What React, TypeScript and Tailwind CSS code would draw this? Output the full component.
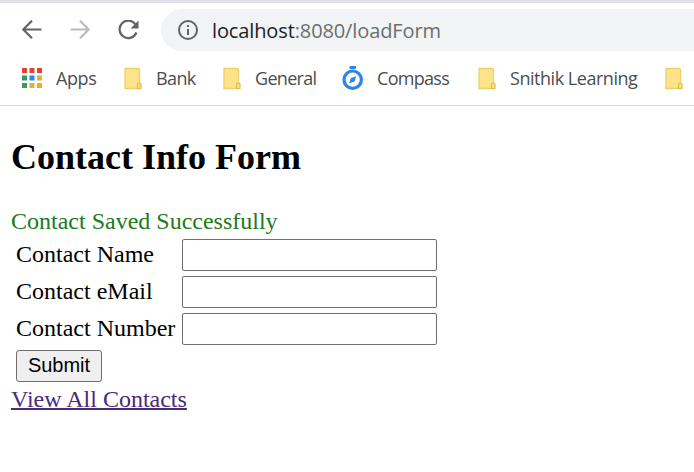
import React from "react";

function Folder() {
  return (
    <svg className="block shrink-0" width="20" height="24" viewBox="0 0 20 24">
      <path d="M2 2.500H15q1.500 0 1.500 1V22.500H2z" fill="#fde48b" stroke="#ecd06a" strokeWidth="1.300" />
      <path d="M14.500 22.500v-4q0-1.500 1.500-1.500h.500q1.500 0 1.500 1v4.500z" fill="#fbdf80" stroke="#dfbd4e" strokeWidth="1.200" />
    </svg>
  );
}

function AppsGrid() {
  const colors = ["#db4437", "#db4437", "#db4437", "#3c9a5f", "#2f86e0", "#e8ae2e", "#3c9a5f", "#e8ae2e", "#e8ae2e"];
  return (
    <svg className="block shrink-0" width="20" height="20" viewBox="0 0 20 20">
      {colors.map((c, i) => (
        <rect key={i} x={(i % 3) * 7.5} y={Math.floor(i / 3) * 7.5} width="5" height="5" fill={c} />
      ))}
    </svg>
  );
}

function Compass() {
  return (
    <svg className="block shrink-0" width="22" height="26" viewBox="0 0 22 26">
      <rect x="7.500" y="1" width="6.500" height="3" rx="0.700" fill="#2b87e3" />
      <circle cx="10.700" cy="14.700" r="8.700" fill="none" stroke="#2b87e3" strokeWidth="3.200" />
      <path d="M14.200 11.200L12.600 16.400L7.200 18.200L8.800 13z" fill="#2b87e3" />
    </svg>
  );
}

function Mark({ icon, label, iconClass, textClass }: { icon: React.ReactNode; label: string; iconClass: string; textClass: string }) {
  return (
    <div className="flex shrink-0 items-center">
      <div className={"flex shrink-0 " + iconClass}>{icon}</div>
      <span className={"whitespace-nowrap text-[18px] leading-6 " + textClass}>{label}</span>
    </div>
  );
}

export default function App() {
  return (
    <div className="h-[472px] w-[694px] overflow-hidden bg-white">
      <header className="h-[106px] border-b border-[#d8d9dc] font-['Open_Sans','Noto_Sans',sans-serif]">
        <div className="h-[3px] bg-[#dee1e6]" />
        <div className="flex h-[54px] items-center pl-[22px]">
          <svg className="shrink-0" width="20" height="20" viewBox="0 0 20 20" fill="none" stroke="#5f6368" strokeWidth="2.200">
            <path d="M19.500 9.500H1.800M10 .700L1.200 9.500L10 18.300" />
          </svg>
          <svg className="ml-[28px] shrink-0" width="20" height="20" viewBox="0 0 20 20" fill="none" stroke="#b9bbbd" strokeWidth="2.200">
            <path d="M.500 9.500H18.200M10 .700L18.800 9.500L10 18.300" />
          </svg>
          <svg className="ml-[28px] shrink-0" width="21" height="20" viewBox="0 0 21 20">
            <path d="M17.500 4.500A8.700 8.700 0 1 0 18.400 12.500" fill="none" stroke="#5f6368" strokeWidth="2.200" />
            <path d="M20.500.500V8.500H12.500z" fill="#5f6368" />
          </svg>
          <div className="ml-[22px] flex h-[42px] flex-1 items-center rounded-l-full bg-[#f1f3f4] pl-[17px]">
            <svg className="shrink-0" width="20" height="20" viewBox="0 0 20 20">
              <circle cx="10" cy="10" r="9" fill="none" stroke="#5f6368" strokeWidth="2" />
              <path d="M9 9h2v6H9zM9 5h2v2H9z" fill="#5f6368" />
            </svg>
            <span className="ml-[14px] mt-px whitespace-nowrap text-[20px] leading-6 tracking-[-0.12px] text-[#6b6e72]">
              <span className="text-[#202124]">localhost</span>:8080/loadForm
            </span>
          </div>
        </div>
        <nav className="flex h-[42px] items-center overflow-hidden pl-[22px] text-[#4a4d51]">
          <Mark icon={<AppsGrid />} label="Apps" iconClass="w-[34px]" textClass="w-[67px] tracking-[-0.4px]" />
          <Mark icon={<Folder />} label="Bank" iconClass="w-[33px]" textClass="w-[66px] tracking-[-0.6px]" />
          <Mark icon={<Folder />} label="General" iconClass="w-[33px]" textClass="w-[87px] tracking-[-0.7px]" />
          <Mark icon={<Compass />} label="Compass" iconClass="w-[35px]" textClass="w-[100px] tracking-[-0.7px]" />
          <Mark icon={<Folder />} label="Snithik Learning" iconClass="w-[33px]" textClass="w-[154px] tracking-[-0.47px]" />
          <Folder />
        </nav>
      </header>
      <main className="pl-[11px] pt-[31px] font-['Liberation_Serif',serif] text-[24px] leading-7 text-black">
        <h2 className="text-[36px] font-bold leading-10">Contact Info Form</h2>
        <p className="mt-[30px] text-[#1c7a1c]">Contact Saved Successfully</p>
        <form className="mt-1 pl-[5px]" onSubmit={(e) => e.preventDefault()}>
          {["Contact Name", "Contact eMail", "Contact Number"].map((label) => (
            <label key={label} className="mb-[5px] flex h-8">
              <span className="w-[166px] whitespace-nowrap leading-[30px]">{label}</span>
              <input className="h-8 w-[255px] rounded-[2px] border border-[#6f6f6f] bg-white" />
            </label>
          ))}
          <button className="block h-8 w-[86px] rounded-[3px] border border-[#6f6f6f] bg-[#efefef] pb-[2px] font-['Liberation_Sans',sans-serif] text-[20px] leading-[28px]">
            Submit
          </button>
        </form>
        <a href="#" className="mt-[3px] block w-fit text-[#4b2a78] underline decoration-2">View All Contacts</a>
      </main>
    </div>
  );
}
